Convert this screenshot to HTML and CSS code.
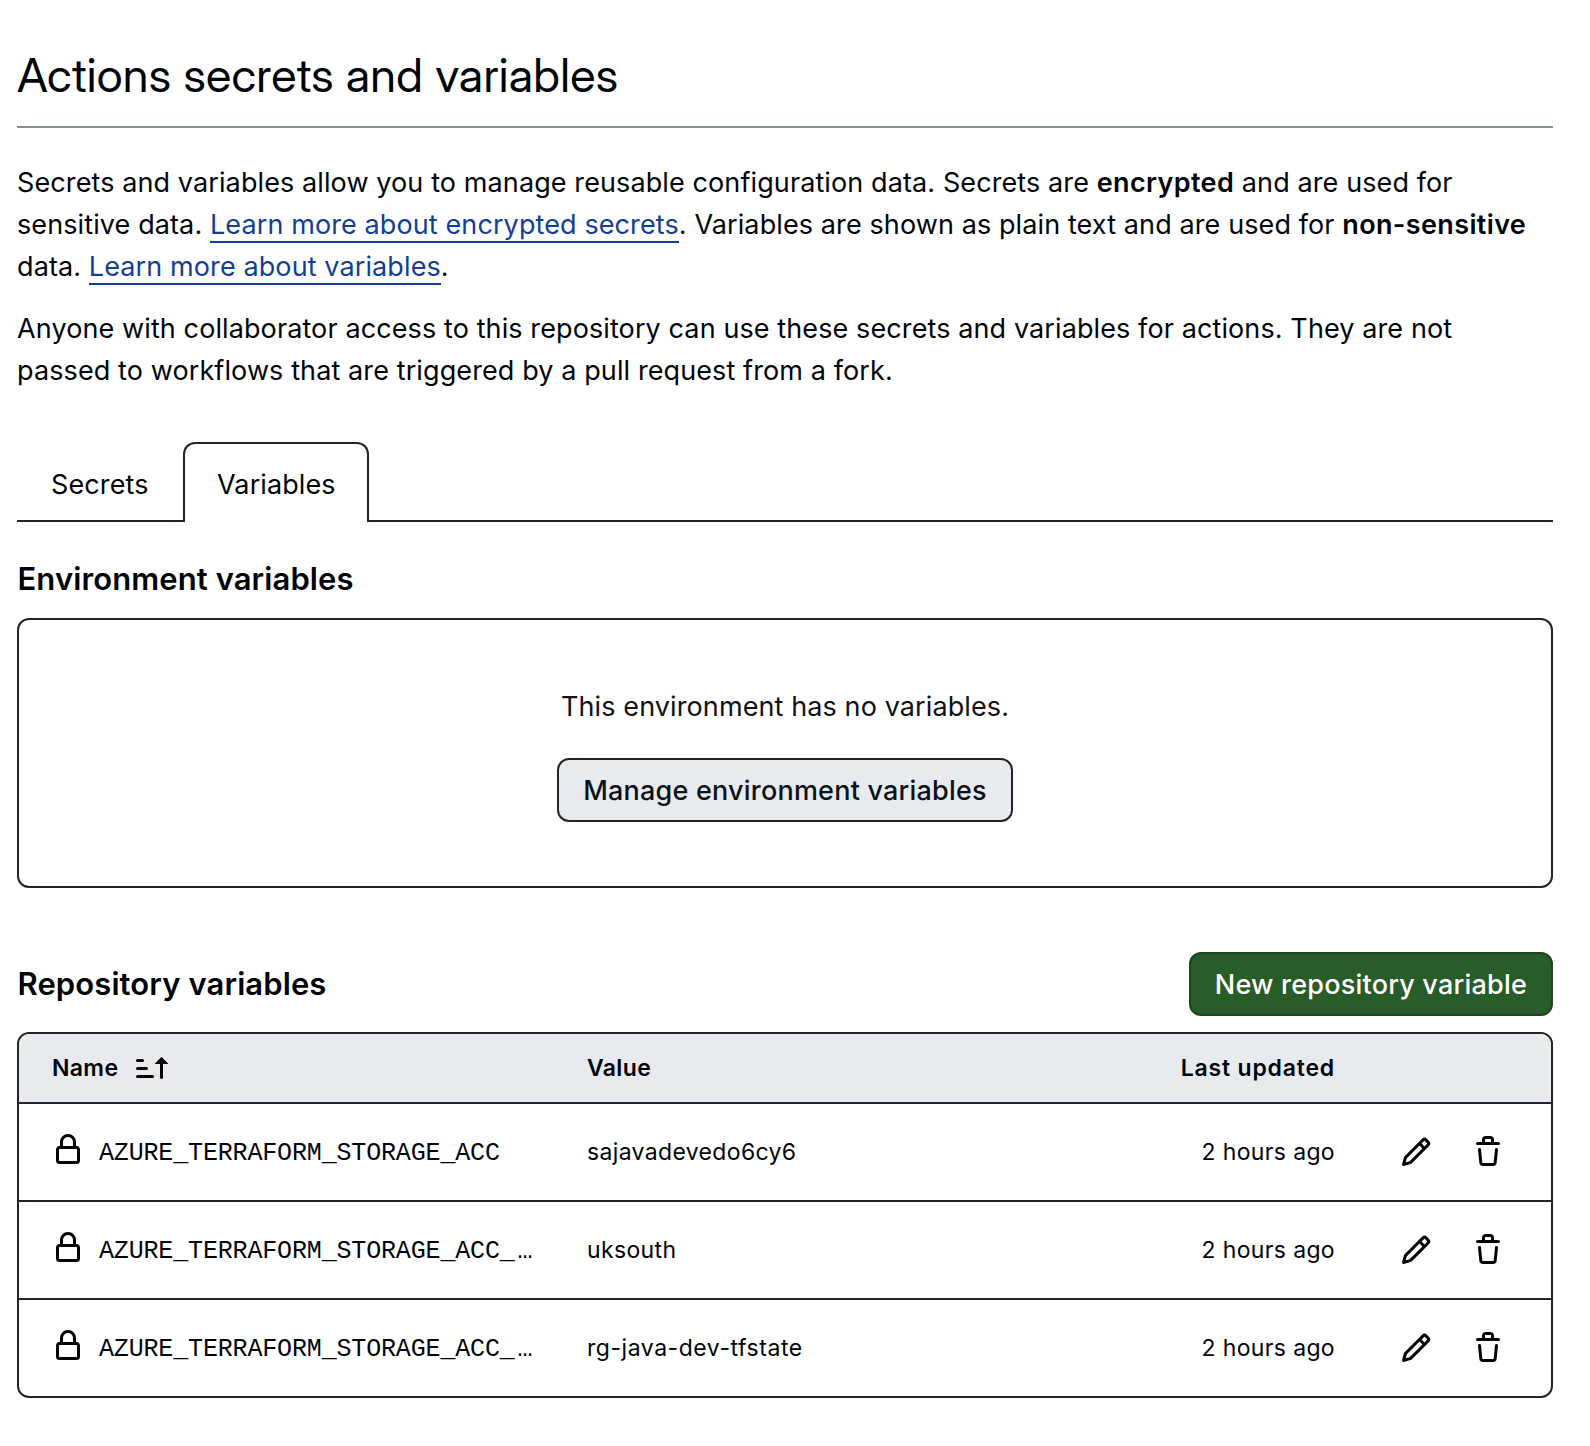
FILE: index.html
```html
<!DOCTYPE html>
<html lang="en">
<head>
<meta charset="utf-8">
<title>Actions secrets and variables</title>
<link rel="stylesheet" href="styles.css">
</head>
<body>
<svg class="sprite" aria-hidden="true">
<symbol id="lock" viewBox="0 0 16 16"><path d="M4 4a4 4 0 0 1 8 0v2h.25c.966 0 1.75.784 1.75 1.75v5.5A1.75 1.75 0 0 1 12.25 15h-8.5A1.75 1.75 0 0 1 2 13.25v-5.5C2 6.784 2.784 6 3.75 6H4Zm8.25 3.5h-8.5a.25.25 0 0 0-.25.25v5.5c0 .138.112.25.25.25h8.5a.25.25 0 0 0 .25-.25v-5.5a.25.25 0 0 0-.25-.25ZM10.5 6V4a2.5 2.5 0 1 0-5 0v2Z"/></symbol>
<symbol id="pencil" viewBox="0 0 16 16"><path d="M11.013 1.427a1.75 1.75 0 0 1 2.474 0l1.086 1.086a1.75 1.75 0 0 1 0 2.474l-8.61 8.61c-.21.21-.47.364-.756.445l-3.251.93a.75.75 0 0 1-.927-.928l.929-3.25c.081-.286.235-.547.445-.758l8.61-8.61Zm.176 4.823L9.75 4.81l-6.286 6.287a.253.253 0 0 0-.064.108l-.558 1.953 1.953-.558a.253.253 0 0 0 .108-.064Zm1.238-3.763a.25.25 0 0 0-.354 0L10.811 3.75l1.439 1.44 1.263-1.263a.25.25 0 0 0 0-.354Z"/></symbol>
<symbol id="trash" viewBox="0 0 16 16"><path d="M11 1.75V3h2.25a.75.75 0 0 1 0 1.5H2.75a.75.75 0 0 1 0-1.5H5V1.75C5 .784 5.784 0 6.75 0h2.5C10.216 0 11 .784 11 1.75ZM4.496 6.675l.66 6.6a.25.25 0 0 0 .249.225h5.19a.25.25 0 0 0 .249-.225l.66-6.6a.75.75 0 0 1 1.492.149l-.66 6.6A1.748 1.748 0 0 1 10.595 15h-5.19a1.75 1.75 0 0 1-1.741-1.575l-.66-6.6a.75.75 0 1 1 1.492-.15ZM6.5 1.75V3h3V1.75a.25.25 0 0 0-.25-.25h-2.5a.25.25 0 0 0-.25.25Z"/></symbol>
<symbol id="sort" viewBox="0 0 16 16"><path d="m12.927 2.573 3 3A.25.25 0 0 1 15.75 6H13.5v6.75a.75.75 0 0 1-1.5 0V6H9.75a.25.25 0 0 1-.177-.427l3-3a.25.25 0 0 1 .354 0ZM0 12.25a.75.75 0 0 1 .75-.75h7.5a.75.75 0 0 1 0 1.5H.75a.75.75 0 0 1-.75-.75Zm0-4a.75.75 0 0 1 .75-.75h4.5a.75.75 0 0 1 0 1.5H.75A.75.75 0 0 1 0 8.25Zm0-4a.75.75 0 0 1 .75-.75h2.5a.75.75 0 0 1 0 1.5H.75A.75.75 0 0 1 0 4.25Z"/></symbol>
</svg>
<main class="page">
<h1 class="title">Actions secrets and variables</h1>
<p class="intro">Secrets and variables allow you to manage reusable configuration data. Secrets are <b>encrypted</b> and are used for<br>sensitive data. <a class="link" href="#">Learn more about encrypted secrets</a>. Variables are shown as plain text and are used for <b>non-sensitive</b><br>data. <a class="link" href="#">Learn more about variables</a>.</p>
<p class="intro">Anyone with collaborator access to this repository can use these secrets and variables for actions. They are not<br>passed to workflows that are triggered by a pull request from a fork.</p>
<nav class="tabs"><a class="tab">Secrets</a><a class="tab tab-active">Variables</a></nav>
<h2 class="heading">Environment variables</h2>
<section class="empty"><p class="empty-text">This environment has no variables.</p><button class="btn">Manage environment variables</button></section>
<div class="repo-head"><h2 class="heading">Repository variables</h2><button class="btn btn-primary">New repository variable</button></div>
<section class="table">
<div class="row row-head"><div class="name">Name<svg class="icon sort"><use href="#sort"/></svg></div><div>Value</div><div class="updated">Last updated</div></div>
<div class="row"><div class="name"><svg class="icon lock"><use href="#lock"/></svg><code>AZURE_TERRAFORM_STORAGE_ACC</code></div><div>sajavadevedo6cy6</div><div class="updated">2 hours ago</div><div class="actions"><svg class="icon"><use href="#pencil"/></svg><svg class="icon"><use href="#trash"/></svg></div></div>
<div class="row"><div class="name"><svg class="icon lock"><use href="#lock"/></svg><code>AZURE_TERRAFORM_STORAGE_ACC_<span class="more">…</span></code></div><div>uksouth</div><div class="updated">2 hours ago</div><div class="actions"><svg class="icon"><use href="#pencil"/></svg><svg class="icon"><use href="#trash"/></svg></div></div>
<div class="row"><div class="name"><svg class="icon lock"><use href="#lock"/></svg><code>AZURE_TERRAFORM_STORAGE_ACC_<span class="more">…</span></code></div><div class="hyphenated">rg-java-dev-tfstate</div><div class="updated">2 hours ago</div><div class="actions"><svg class="icon"><use href="#pencil"/></svg><svg class="icon"><use href="#trash"/></svg></div></div>
</section>
</main>
</body>
</html>
```
FILE: styles.css
```css
* { box-sizing: border-box; }

body {
  margin: 0;
  background: #fff;
  color: #010409;
  font: 400 27px/42px Inter, "Liberation Sans", sans-serif;
  letter-spacing: 0.105px;
}

.sprite { display: none; }

.page {
  display: flex;
  flex-direction: column;
  width: 1536px;
  margin-left: 17px;
}

h1, h2, p { margin: 0; }

.title {
  height: 128px;
  padding-top: 39px;
  border-bottom: 2px solid #868f99;
  font-family: "Inter Display", Inter, sans-serif;
  font-size: 47px;
  font-weight: 400;
  line-height: 72px;
  letter-spacing: 0.27px;
}

.intro { padding-top: 34px; white-space: nowrap; }
.intro + .intro { padding-top: 20px; }
.intro b { font-weight: 600; letter-spacing: 0.36px; }

.link {
  color: #123f94;
  border-bottom: 2px solid #123f94;
  text-decoration: none;
}

.tabs { display: flex; height: 80px; margin-top: 50px; }
.tab { width: 166px; padding: 22px 0 0 34px; border-bottom: 2px solid #20252c; }
.tabs::after { content: ""; flex: 1; border-bottom: 2px solid #20252c; }
.tab-active {
  width: 186px;
  padding: 20px 0 0 32px;
  border: 2px solid #20252c;
  border-bottom: 0;
  border-radius: 12px 12px 0 0;
}

.heading {
  padding-left: 0.5px;
  font-size: 31px;
  font-weight: 600;
  line-height: 48px;
  letter-spacing: 0.1px;
}
.tabs + .heading { margin: 33px 0 15px; }

.empty {
  display: flex;
  flex-direction: column;
  align-items: center;
  height: 270px;
  padding-top: 66px;
  border: 2px solid #20252c;
  border-radius: 12px;
}

.empty-text { margin-bottom: 30px; color: #0e1116; }

.btn {
  height: 64px;
  padding: 1px 24px 0;
  border: 2px solid #20252c;
  border-radius: 12px;
  background: #e7ebf0;
  color: #0e1116;
  font: 500 27px/42px Inter, sans-serif;
  letter-spacing: 0.21px;
}

.btn-primary { border-color: #1a471c; background: #285c28; color: #fff; }

.repo-head {
  display: flex;
  align-items: center;
  justify-content: space-between;
  margin: 64px 0 16px;
}

.table {
  overflow: hidden;
  border: 2px solid #20252c;
  border-radius: 12px;
  font-size: 23px;
  letter-spacing: 0.35px;
}

.row {
  display: grid;
  grid-template-columns: 535px 1fr 300px 216px;
  align-items: center;
  height: 98px;
  padding-left: 33px;
  border-top: 2px solid #20252c;
}

.row-head {
  height: 68px;
  border-top: 0;
  background: #e7ebf0;
  font-weight: 600;
}

.name, .actions { display: flex; align-items: center; }
.updated { text-align: right; }
.row-head .updated { letter-spacing: 0.8px; }
.hyphenated { letter-spacing: 0.54px; }
.actions { gap: 40px; padding-left: 65px; }
.icon { width: 32px; height: 32px; fill: currentColor; }
.sort { margin-left: 18px; }
.lock { margin: 0 15px 4px 0; }
code {
  padding-top: 4px;
  font: 25px/36px "Liberation Mono", monospace;
  letter-spacing: -0.16px;
}
.more { margin-left: 3px; }
```
